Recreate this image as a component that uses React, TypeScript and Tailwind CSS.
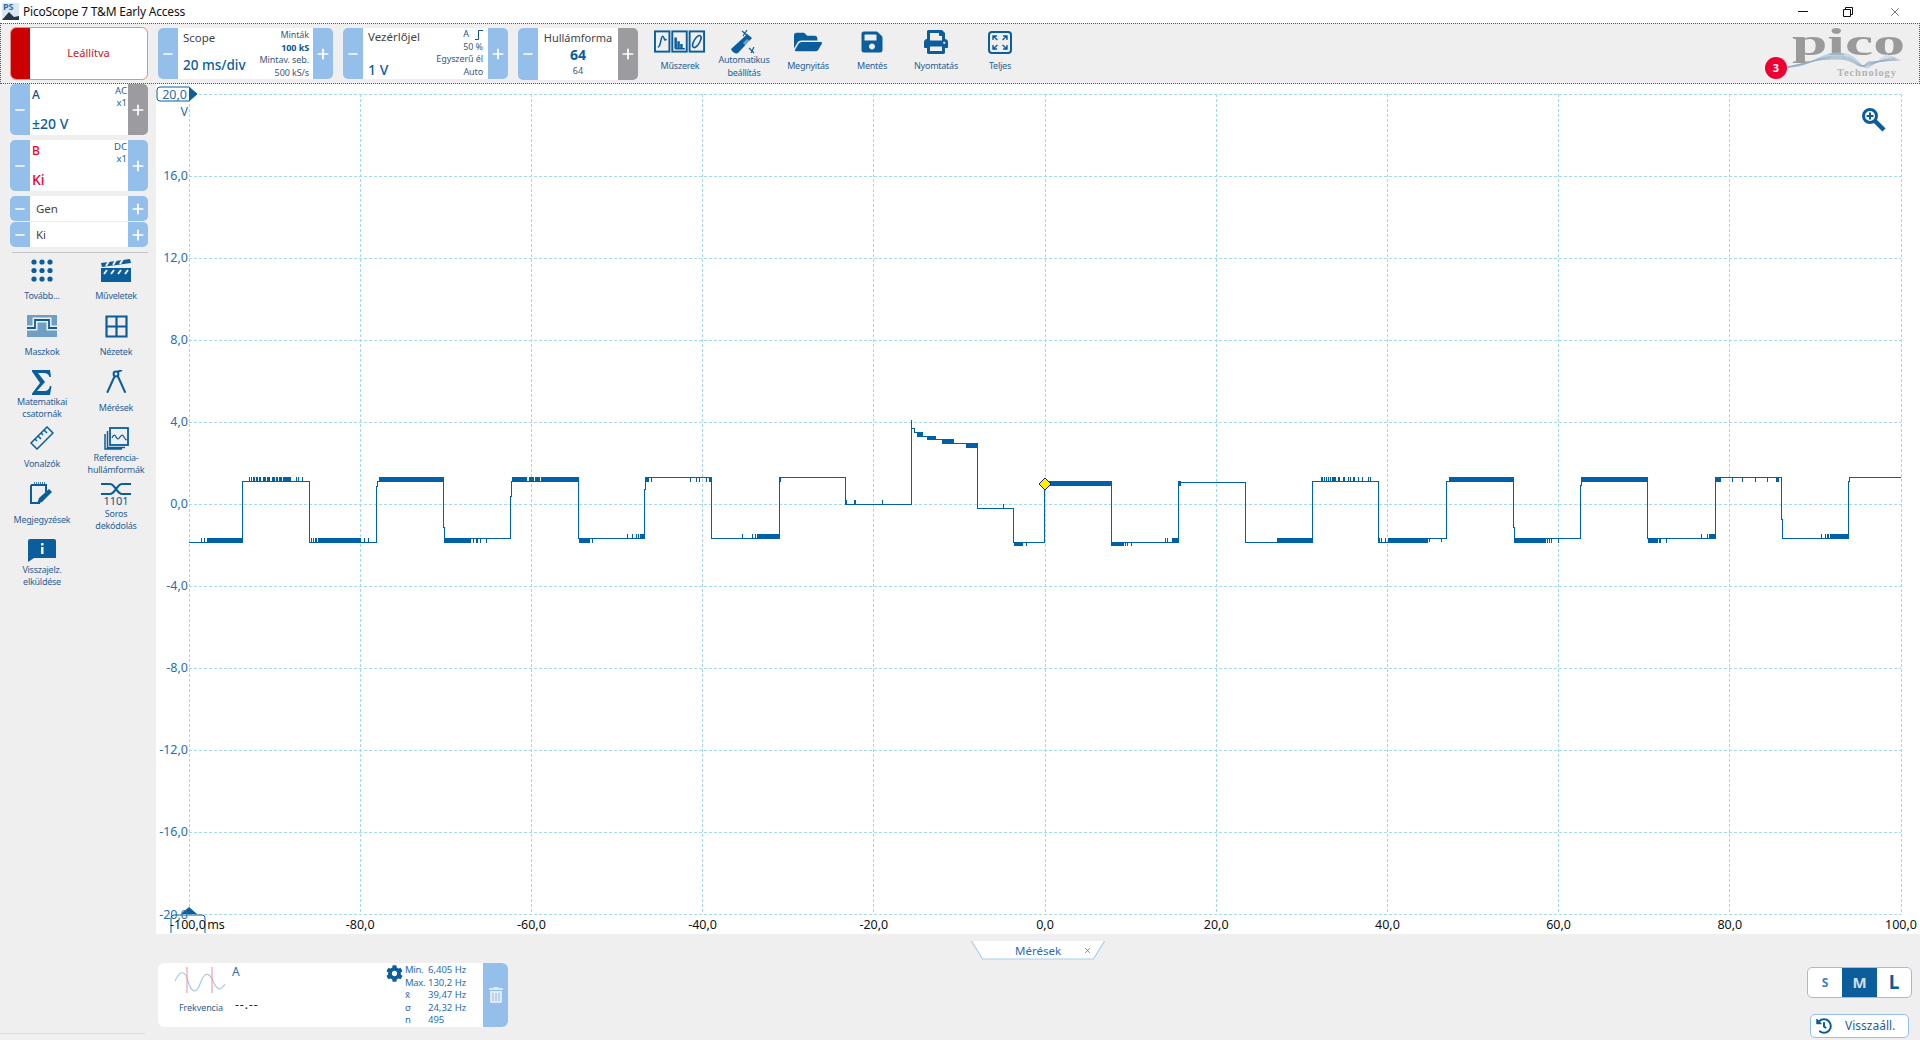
import { Minus, Plus, X } from 'lucide-react';
import { FaCog, FaFolderOpen, FaHistory, FaPrint, FaSave, FaTrashAlt } from 'react-icons/fa';
import type { ReactNode } from 'react';

const BLUE = '#0b5d9c';

type Rect = [number, number, number, number];

const band = (y1: number, y2: number, spans: [number, number][]): Rect[] => spans.map(([a, b]) => [a, b, y1, y2]);

const trace: [number, number][] = [
  [189, 542], [242.5, 542], [242.5, 481], [309.5, 481], [309.5, 542], [376.5, 542], [376.5, 486], [377.5, 486], [377.5, 481],
  [443, 481], [443, 527], [444, 527], [444, 538], [510.5, 538], [510.5, 496], [511.5, 496], [511.5, 481], [578.5, 481],
  [578.5, 538], [644.5, 538], [644.5, 489], [645.5, 489], [645.5, 477], [711, 477], [711, 538], [779.5, 538], [779.5, 477],
  [845.5, 477], [845.5, 504], [911, 504], [911, 420], [911, 428], [914.5, 428], [914.5, 432], [922, 432], [922, 436], [935, 436],
  [935, 439], [952, 439], [952, 443], [977.5, 443], [977.5, 508], [1013, 508], [1013, 542], [1044.5, 542], [1044.5, 484],
  [1111.5, 484], [1111.5, 542], [1178.5, 542], [1178.5, 482], [1245.5, 482], [1245.5, 542], [1312.5, 542], [1312.5, 481.5],
  [1378.5, 481.5], [1378.5, 542], [1427, 542], [1427, 538], [1446.5, 538], [1446.5, 481], [1513.5, 481], [1513.5, 527],
  [1514.5, 527], [1514.5, 538], [1580.5, 538], [1580.5, 485], [1581.5, 485], [1581.5, 481], [1647.5, 481], [1647.5, 538],
  [1715.5, 538], [1715.5, 477], [1781.5, 477], [1781.5, 519], [1782.5, 519], [1782.5, 538], [1848.5, 538], [1848.5, 481],
  [1849.5, 481], [1849.5, 477], [1901, 477],
];

const bands: Rect[] = [
  ...band(538, 542, [[201, 202], [204, 205], [207, 243], [311, 312], [313, 314], [315, 317], [318, 361], [364, 365], [368, 369], [376, 377]]),
  ...band(477, 481, [[249, 250], [251, 252], [253, 255], [256, 258], [259, 261], [263, 266], [267, 270], [272, 275], [276, 278], [279, 282], [283, 291], [296, 297], [298, 299], [302, 303]]),
  ...band(477, 482, [[379, 443.5], [512, 527], [529, 534], [535, 540], [541, 578.5], [1449, 1514], [1581, 1648], [1500, 1514]]),
  ...band(538, 543, [[444, 471], [473, 474], [476, 478], [480, 481], [486, 487], [579, 590], [592, 593], [1514, 1546], [1547, 1548], [1549, 1550], [1551, 1552], [1558, 1559], [1648, 1658], [1659, 1661], [1666, 1667]]),
  ...band(534, 538, [[627, 628], [632, 633], [636, 637], [638, 639], [640, 645], [742, 743], [752, 753], [755, 756], [757, 780], [1701, 1702], [1707, 1708], [1709, 1716], [1821, 1822], [1825, 1826], [1827, 1829], [1830, 1849]]),
  ...band(477, 482, [[645, 649], [651, 652], [690, 691], [696, 697], [699, 700], [706, 707], [709, 711], [779, 781], [1715, 1721], [1732, 1733], [1742, 1743], [1755, 1756], [1767, 1768], [1776, 1779]]),
  ...band(500, 504, [[846, 847], [854, 856], [882, 883]]),
  ...band(432, 437, [[917, 922]]),
  ...band(436, 440, [[927, 935]]),
  ...band(439, 444, [[942, 952], [952.5, 953.5]]),
  ...band(443, 448, [[966, 978]]),
  ...band(504, 508, [[1003, 1004]]),
  ...band(542, 546, [[1014, 1023], [1026, 1027], [1111, 1124], [1125, 1126], [1127, 1128], [1131, 1132]]),
  ...band(481, 486, [[1046, 1112], [1178, 1181]]),
  ...band(538, 542, [[1165, 1166], [1167, 1168], [1172, 1179], [1277, 1313], [1379, 1380], [1381, 1382], [1385, 1386], [1388, 1427], [1429, 1430], [1441, 1442]]),
  ...band(477, 481, [[1321, 1323], [1324, 1325], [1326, 1327], [1328, 1329], [1330, 1331], [1332, 1336], [1338, 1340], [1343, 1345], [1348, 1349], [1350, 1351], [1353, 1355], [1358, 1359], [1362, 1363], [1368, 1369], [1370, 1371]]),
];

const yLabels = ['16,0', '12,0', '8,0', '4,0', '0,0', '-4,0', '-8,0', '-12,0', '-16,0'];
const xLabels = ['-80,0', '-60,0', '-40,0', '-20,0', '0,0', '20,0', '40,0', '60,0', '80,0', '100,0'];
const gridX = Array.from({ length: 11 }, (_, i) => 189 + i * 171.2);
const gridY = Array.from({ length: 11 }, (_, i) => 94 + i * 82);

const StepButton = ({ kind, gray, className = '' }: { kind: 'minus' | 'plus'; gray?: boolean; className?: string }) => (
  <div className={`flex w-5 items-center justify-center text-white ${gray ? 'bg-[#9c9ca0]' : 'bg-[#93bfea]'} ${className}`}>
    {kind === 'minus' ? <Minus size={14} strokeWidth={2.6} /> : <Plus size={16} strokeWidth={2.6} />}
  </div>
);

const Stepper = ({ className, children, grayPlus }: { className: string; children: ReactNode; grayPlus?: boolean }) => (
  <div className={`flex overflow-hidden rounded-[5px] bg-white ${className}`}>
    <StepButton kind="minus" />
    <div className="relative min-w-0 flex-1">{children}</div>
    <StepButton kind="plus" gray={grayPlus} />
  </div>
);

const Small = ({ children, bold }: { children: ReactNode; bold?: boolean }) => (
  <div className={`text-right text-[9px] leading-[12.5px] tracking-[-0.1px] ${bold ? 'font-bold text-[#12548c]' : 'text-[#3d5a78]'}`}>{children}</div>
);

const Channel = ({ name, coupling, value, red, grayPlus }: { name: string; coupling: string; value: string; red?: boolean; grayPlus?: boolean }) => (
  <Stepper className="ml-[10px] h-[51px] w-[138px]" grayPlus={grayPlus}>
    <div className="flex h-full flex-col justify-between pb-[1px] pl-[2px] pr-[1px]">
      <div className="flex justify-between">
        <span className={`pt-[2px] text-[12px] font-medium ${red ? 'text-[#ec0033]' : 'text-[#12548c]'}`}>{name}</span>
        <div className="pt-[1px] text-right text-[9.5px] leading-[12px] text-[#2a5f95]">
          <div>{coupling}</div>
          <div>x1</div>
        </div>
      </div>
      <span className={`text-[14px] font-medium leading-[20px] ${red ? 'text-[#ec0033]' : 'text-[#0b5d9c]'}`}>{value}</span>
    </div>
  </Stepper>
);

const MusicIcon = () => (
  <svg width="52" height="24" viewBox="0 0 54 24" fill="none" stroke={BLUE} strokeWidth="1.6">
    <rect x="1" y="1" width="15" height="21" strokeWidth="2" />
    <rect x="19" y="1" width="15" height="21" strokeWidth="2" />
    <rect x="37" y="1" width="15" height="21" strokeWidth="2" />
    <path d="M4 17c3 1 3-11 5-11s1 6 4 3" />
    <path d="M22 19V8h1v11h2v-7h1v7h2v-4h1v4h3" />
    <ellipse cx="44.5" cy="11.5" rx="3" ry="7" transform="rotate(30 44.5 11.5)" />
  </svg>
);

const WandIcon = () => (
  <svg width="26" height="24" viewBox="0 0 26 24" fill={BLUE}>
    <path d="M13 9l5-5 5 4-14 15c-2 1-4 0-6-2l-1-2z" transform="translate(-2 0)" />
    <path d="M11 1l6 5M16 0l-4 6M18 18l5 5M23 17l-3 6" stroke={BLUE} strokeWidth="1.2" fill="none" />
    <path d="M12 13l3 3 4-5-3-2z" fill="#efefef" opacity="0.45" />
  </svg>
);

const FullIcon = () => (
  <svg width="24" height="23" viewBox="0 0 24 23" fill="none" stroke={BLUE} strokeWidth="1.4">
    <rect x="1" y="1" width="22" height="21" rx="3" strokeWidth="2" />
    <path d="M5 9V5h4M5 5l4.500 4M19 9V5h-4M19 5l-4.500 4M5 14v4h4M5 18l4.500-4M19 14v4h-4M19 18l-4.500-4" />
  </svg>
);

const DotsIcon = () => (
  <svg width="22" height="23" viewBox="0 0 22 23" fill={BLUE}>
    {[3, 11.5, 20].flatMap((cy) => [3, 11, 19].map((cx) => <circle key={`${cx}-${cy}`} cx={cx} cy={cy} r="2.6" />))}
  </svg>
);

const ClapIcon = () => (
  <svg width="30" height="23" viewBox="0 0 30 23" fill={BLUE}>
    <path d="M0 4L29 0l1 4L1 8z" />
    <path d="M0 9h30v14H0z" />
    <path d="M5 7l3-5M12 6l3-5M19 5l3-5" stroke="#efefef" strokeWidth="2" />
    <path d="M6 11l-3 4M13 11l-3 4M20 11l-3 4M27 11l-3 4" stroke="#efefef" strokeWidth="2" />
  </svg>
);

const MaskIcon = () => (
  <svg width="30" height="22" viewBox="0 0 30 22">
    <rect width="30" height="22" fill="#6f9fc4" />
    <path d="M0 13h8V5h14v8h8" fill="none" stroke="#efefef" strokeWidth="5" />
    <path d="M0 13h8V5h14v8h8" fill="none" stroke={BLUE} strokeWidth="1.8" />
  </svg>
);

const ViewsIcon = () => (
  <svg width="23" height="23" viewBox="0 0 23 23" fill="none" stroke={BLUE} strokeWidth="2.2">
    <path d="M1.5 1.5h20v20h-20zM11.5 1.5v20M1.5 11.5h20" />
  </svg>
);

const SigmaIcon = () => (
  <svg width="20" height="25" viewBox="0 0 20 25" fill={BLUE}>
    <path d="M0 0h18l1 7h-1.500c-1-3-2.500-4-6-4H6l7 9-8 9h7c3 0 5-1 6-5h1.500L18 25H0v-1.500L8 13 0 1.500z" />
  </svg>
);

const CompassIcon = () => (
  <svg width="20" height="24" viewBox="0 0 20 24" fill="none" stroke={BLUE} strokeWidth="2">
    <circle cx="10" cy="4" r="2.400" />
    <path d="M8.500 6.500L1.500 22M12 6.500L19 22" strokeLinecap="round" />
    <path d="M11 2l5-2" />
  </svg>
);

const RulerIcon = () => (
  <svg width="24" height="24" viewBox="0 0 24 24" fill="none" stroke={BLUE} strokeWidth="1.500">
    <path d="M1 17L17 1l6 6L7 23z" />
    <path d="M5 13l2 2M8 10l3 3M11 7l2 2M14 4l3 3" />
  </svg>
);

const RefIcon = () => (
  <svg width="25" height="23" viewBox="0 0 25 23" fill="none" stroke={BLUE} strokeWidth="1.500">
    <rect x="6" y="1" width="18" height="17" strokeWidth="1.800" />
    <path d="M3.500 4v16.500H21M1 7v15h17" />
    <path d="M8 11c3-7 4 1 6 1s3-7 6-2 2 2 2 2" strokeWidth="1.200" />
  </svg>
);

const NoteIcon = () => (
  <svg width="26" height="24" viewBox="0 0 26 24" fill="none">
    <path d="M2 3h15v7M2 3v18h9" stroke={BLUE} strokeWidth="2" />
    <path d="M5 1h12" stroke={BLUE} strokeWidth="1.500" strokeDasharray="1 1" />
    <path d="M8 22l2-6 10-9 3 3-10 10z" fill={BLUE} />
  </svg>
);

const SerialIcon = () => (
  <div className="flex flex-col items-center">
    <svg width="30" height="14" viewBox="0 0 30 14" fill="none" stroke={BLUE} strokeWidth="2.200">
      <path d="M0 2h9c3 0 5 4 6 5s3 5 6 5h9M0 12h9c3 0 5-4 6-5s3-5 6-5h9" />
    </svg>
    <span className="text-[11px] leading-[10px] text-[#12548c]">1101</span>
  </div>
);

const FeedbackIcon = () => (
  <svg width="28" height="23" viewBox="0 0 28 23" fill={BLUE}>
    <path d="M2 0h24a2 2 0 0 1 2 2v17H6l-6 4V2a2 2 0 0 1 2-2z" />
    <rect x="13" y="4" width="2.500" height="2.500" fill="#fff" />
    <rect x="13" y="8" width="2.500" height="7" fill="#fff" />
  </svg>
);

const EdgeIcon = () => (
  <svg className="inline-block" width="8" height="10" viewBox="0 0 8 10" fill="none" stroke="#12548c" strokeWidth="1">
    <path d="M0 9.500h3.500V.5H8" />
  </svg>
);

const tools: { label: ReactNode; icon: ReactNode }[] = [
  { label: 'Tovább...', icon: <DotsIcon /> },
  { label: 'Műveletek', icon: <ClapIcon /> },
  { label: 'Maszkok', icon: <MaskIcon /> },
  { label: 'Nézetek', icon: <ViewsIcon /> },
  { label: <>Matematikai<br />csatornák</>, icon: <SigmaIcon /> },
  { label: 'Mérések', icon: <CompassIcon /> },
  { label: 'Vonalzók', icon: <RulerIcon /> },
  { label: <>Referencia-<br />hullámformák</>, icon: <RefIcon /> },
  { label: 'Megjegyzések', icon: <NoteIcon /> },
  { label: <>Soros<br />dekódolás</>, icon: <SerialIcon /> },
  { label: <>Visszajelz.<br />elküldése</>, icon: <FeedbackIcon /> },
];

const topTools: { label: ReactNode; icon: ReactNode }[] = [
  { label: 'Műszerek', icon: <MusicIcon /> },
  { label: <>Automatikus<br />beállítás</>, icon: <WandIcon /> },
  { label: 'Megnyitás', icon: <FaFolderOpen size={28} color={BLUE} /> },
  { label: 'Mentés', icon: <FaSave size={24} color={BLUE} /> },
  { label: 'Nyomtatás', icon: <FaPrint size={24} color={BLUE} /> },
  { label: 'Teljes', icon: <FullIcon /> },
];

const Logo = () => (
  <svg className="overflow-visible" width="120" height="54" viewBox="0 0 120 54">
    <text x="4" y="29" fontFamily="'Liberation Serif', serif" fontWeight="700" fontSize="37" fill="#9a9a9a" textLength="113" lengthAdjust="spacingAndGlyphs">pico</text>
    {[0, 1, 2, 3, 4, 5, 6].map((i) => (
      <path key={i} d={`M0 41 C25 ${41 - i} 30 ${27 + i} 50 ${27 + i} S70 ${41 + i} 80 ${42 - i} L${100 + i * 2} ${28 + i}`} fill="none" stroke={i < 3 ? '#a9c8e4' : '#8fa9c0'} strokeWidth="0.7" />
    ))}
    <text x="49" y="50" fontFamily="'Liberation Serif', serif" fontWeight="700" fontSize="10.500" fill="#b4b4b4" textLength="59">Technology</text>
  </svg>
);

const Chart = () => (
  <svg className="block h-full w-full" viewBox="156 84 1764 850">
    <g stroke="#a5dbe8" strokeDasharray="3 2" shapeRendering="crispEdges">
      {gridX.map((x) => <line key={x} x1={x} x2={x} y1={94} y2={914} />)}
      {gridY.map((y) => <line key={y} x1={189} x2={1901} y1={y} y2={y} />)}
    </g>
    <g fill="#0060a8" shapeRendering="crispEdges">
      {bands.map((r, i) => <rect key={i} x={r[0]} y={r[2]} width={r[1] - r[0]} height={r[3] - r[2]} />)}
      <polyline points={trace.map((p) => p.join(',')).join(' ')} fill="none" stroke="#0060a8" strokeWidth="1" />
    </g>
    <path d="M1045 478l6 6-6 6-6-6z" fill="#ffef00" stroke="#1414c8" strokeWidth="1" />

    <g fontSize="12.500" fill="#2a6db0" textAnchor="end">
      {yLabels.map((l, i) => <text key={l} x="188" y={180 + i * 82}>{l}</text>)}
      <text x="188" y="116">V</text>
    </g>
    <path d="M160 87h29l8 7-8 7h-29a3 3 0 0 1-3-3v-8a3 3 0 0 1 3-3z" fill="#fff" stroke={BLUE} />
    <path d="M189 87l8 7-8 7z" fill={BLUE} />
    <text x="187" y="98.500" fontSize="12.500" fill="#2a6db0" textAnchor="end">20,0</text>

    <path d="M171 933v-15a3 3 0 0 1 3-3h28a3 3 0 0 1 3 3v15" fill="#fff" stroke={BLUE} />
    <path d="M181 914l8-7 8 7z" fill={BLUE} />
    <text x="188" y="919" fontSize="12.500" fill="#2a6db0" textAnchor="end">-20,0</text>
    <g fontSize="12.500" fill="#111" textAnchor="middle">
      {xLabels.map((l, i) => <text key={l} x={360.200 + i * 171.2} y="929">{l}</text>)}
      <text x="188" y="929">-100,0</text>
      <text x="216" y="929">ms</text>
    </g>
    <g fill="none" stroke={BLUE}>
      <circle cx="1870" cy="116" r="6.500" strokeWidth="3" />
      <path d="M1866.500 116h7M1870 112.500v7" strokeWidth="2" />
      <path d="M1875 121l9 9" strokeWidth="4.500" />
    </g>
  </svg>
);

const stats = [
  ['Min.', '6,405 Hz'],
  ['Max.', '130,2 Hz'],
  ['x̄', '39,47 Hz'],
  ['σ', '24,32 Hz'],
  ['n', '495'],
];

const MeasureCard = () => (
  <div className="ml-[2px] flex h-[64px] w-[350px] overflow-hidden rounded-[6px] bg-white">
    <div className="relative flex-1">
      <div className="flex h-full">
        <div className="w-[74px] pt-[4px]">
          <svg className="ml-[17px]" width="50" height="28" viewBox="0 0 50 28" fill="none">
            <path d="M0 14c5-11 10-11 13 0s8 14 12 3 8-14 13-3 8 9 12 3" stroke="#a6c8ec" strokeWidth="1.200" />
            <path d="M12 0v26M37 0v26" stroke="#f4a0a0" strokeWidth="1.200" />
          </svg>
          <div className="mt-[6px] pl-[21px] text-[9px] leading-[13px] tracking-[-0.1px] text-[#2a5f95]">Frekvencia</div>
        </div>
        <div className="w-[160px]">
          <div className="pt-[1px] text-[12px] leading-[16px] text-[#2a6db0]">A</div>
          <div className="ml-[3px] mt-[18px] text-[12px] leading-[14px] tracking-[1px] text-[#222]">--.--</div>
        </div>
        <FaCog className="ml-[-6px] mt-[2px]" size={17} color={BLUE} />
        <div className="ml-[2px] flex-1 pt-[1px] text-[9.500px] leading-[12.500px] text-[#2a6db0]">
          {stats.map(([k, v]) => (
            <div key={k} className="flex">
              <span className="w-[23px] tracking-[-0.3px]">{k}</span>
              <span>{v}</span>
            </div>
          ))}
        </div>
      </div>
    </div>
    <div className="flex w-[25px] items-center justify-center bg-[#93bfea]">
      <FaTrashAlt size={16} color="#dfeaf6" />
    </div>
  </div>
);

export default function App() {
  return (
    <div className="flex h-[1040px] w-[1920px] flex-col overflow-hidden bg-[#efefef] font-['Noto_Sans',sans-serif] text-[#333]">
      <div className="flex h-[23px] items-center bg-white pl-[2px]">
        <div className="relative h-[17px] w-[17px] bg-[#dbe7f3]">
          <span className="absolute left-[1px] top-[-2px] text-[9px] font-bold leading-[12px] text-[#2a6db0]">PS</span>
          <svg className="absolute bottom-0 left-0" width="17" height="9" viewBox="0 0 17 9"><path d="M0 9L7 1l5 5 5-1v4z" fill="#26374a" /></svg>
        </div>
        <span className="ml-[4px] text-[12px] leading-[16px] tracking-[-0.2px] text-[#111]">PicoScope 7 T&amp;M Early Access</span>
        <div className="ml-auto flex items-center text-[#111]">
          <div className="mr-[35px] h-[1px] w-[10px] bg-[#111]" />
          <svg className="mr-[35px]" width="10" height="10" viewBox="0 0 10 10" fill="none" stroke="#111"><path d="M.5 2.500h7v7h-7zM2.500 2.500v-2h7v7h-2" /></svg>
          <X className="mr-[18px]" size={14} strokeWidth={1} />
        </div>
      </div>

      <div className="relative flex h-[61px] items-center gap-[10px] border border-dotted border-[#555] pl-[9px]">
        <div className="flex h-[53px] w-[138px] overflow-hidden rounded-[6px] border border-[#e98c8c] bg-white">
          <div className="w-[19px] bg-[#cc0000]" />
          <div className="flex flex-1 items-center justify-center text-[11px] text-[#d01818]">Leállítva</div>
        </div>
        <Stepper className="h-[51px] w-[175px]">
          <div className="flex h-full items-stretch justify-between pl-[5px] pr-[4px]">
            <div className="flex flex-col justify-between pb-[4px] pt-[1px]">
              <span className="text-[11.500px] leading-[18px] text-[#444]">Scope</span>
              <span className="text-[13.500px] font-medium leading-[20px] text-[#0b5d9c]">20 ms/div</span>
            </div>
            <div className="pt-[1px]">
              <Small>Minták</Small>
              <Small bold>100 kS</Small>
              <Small>Mintav. seb.</Small>
              <Small>500 kS/s</Small>
            </div>
          </div>
        </Stepper>
        <Stepper className="h-[51px] w-[165px]">
          <div className="flex h-full items-stretch justify-between pl-[5px] pr-[5px]">
            <div className="flex flex-col justify-between">
              <span className="text-[11.500px] leading-[18px] text-[#444]">Vezérlőjel</span>
              <span className="text-[14px] font-medium leading-[18px] text-[#0b5d9c]">1 V</span>
            </div>
            <div>
              <Small><span className="text-[#12548c]">A</span><span className="ml-[6px]"><EdgeIcon /></span></Small>
              <Small>50 %</Small>
              <Small>Egyszerű él</Small>
              <Small>Auto</Small>
            </div>
          </div>
        </Stepper>
        <Stepper className="h-[52px] w-[120px]" grayPlus>
          <div className="flex h-full flex-col items-center text-center">
            <span className="pt-[1px] text-[11px] leading-[17px] text-[#444]">Hullámforma</span>
            <span className="text-[14px] font-bold leading-[18px] text-[#0b5d9c]">64</span>
            <span className="text-[9px] leading-[14px] text-[#3d5a78]">64</span>
          </div>
        </Stepper>
        <div className="flex">
          {topTools.map((t, i) => (
            <div key={i} className="flex w-[64px] flex-col items-center">
              <div className="flex h-[29px] items-center justify-center">{t.icon}</div>
              <div className="mt-[-3px] flex h-[26px] items-center whitespace-nowrap text-center text-[9px] leading-[12.500px] tracking-[-0.25px] text-[#2a5f95]">
                <span>{t.label}</span>
              </div>
            </div>
          ))}
        </div>
        <div className="absolute right-[11px] top-[2px]"><Logo /></div>
        <div className="absolute left-[1764px] top-[33px] flex h-[22px] w-[22px] items-center justify-center rounded-full bg-[#ee0033] text-[11px] font-bold text-white">3</div>
      </div>

      <div className="flex min-h-0 flex-1">
        <div className="flex w-[156px] flex-col">
          <div className="flex flex-col gap-[5px]">
            <Channel name="A" coupling="AC" value="±20 V" grayPlus />
            <Channel name="B" coupling="DC" value="Ki" red />
            <div className="ml-[10px] flex w-[138px] flex-col gap-[1px]">
              {['Gen', 'Ki'].map((t) => (
                <Stepper key={t} className="h-[25px] rounded-[4px]">
                  <div className="flex h-full items-center pl-[6px] text-[11.5px] text-[#444]">{t}</div>
                </Stepper>
              ))}
            </div>
          </div>
          <div className="ml-[12px] mt-[5px] h-[1px] w-[136px] bg-[#c4c4c4]" />
          <div className="ml-[5px] mt-[2px] grid grid-cols-[74px_74px] auto-rows-[56px]">
            {tools.map((t, i) => (
              <div key={i} className="flex flex-col items-center">
                <div className="flex h-[30px] items-center justify-center">{t.icon}</div>
                <div className="flex h-[22px] items-center whitespace-nowrap text-center text-[9px] leading-[12.500px] tracking-[-0.25px] text-[#2a5f95]">
                  <span>{t.label}</span>
                </div>
              </div>
            ))}
          </div>
          <div className="mb-[6px] mt-auto h-[1px] w-[145px] bg-[#dcdcdc]" />
        </div>

        <div className="flex min-w-0 flex-1 flex-col">
          <div className="h-[850px] bg-white"><Chart /></div>
          <div className="flex flex-1 flex-col pt-[7px]">
            <div className="relative mx-auto h-[19px] w-[134px]">
              <svg className="absolute inset-0" width="134" height="19" viewBox="0 0 134 19">
                <path d="M.5 0l11 18h111l11-18z" fill="#fff" />
                <path d="M.5 0l11 18h111l11-18" fill="none" stroke="#a9cdee" strokeWidth="1.200" />
              </svg>
              <div className="relative flex h-full items-center justify-center text-[11.500px] text-[#2a6db0]">Mérések</div>
              <X className="absolute right-[13px] top-[5px] text-[#0b5d9c]" size={9} strokeWidth={1.500} />
            </div>
            <div className="mt-[3px] flex items-start justify-between pr-[8px]">
              <MeasureCard />
              <div className="flex flex-col items-center pt-[4px]">
                <div className="flex h-[31px] w-[105px] overflow-hidden rounded-[5px] border border-[#93bfea] bg-white">
                  <div className="flex flex-1 items-center justify-center text-[12px] font-bold text-[#3f7fb5]">S</div>
                  <div className="flex w-[35px] items-center justify-center bg-[#0b5d9c] text-[15px] font-bold text-[#cfe0f0]">M</div>
                  <div className="flex flex-1 items-center justify-center text-[19px] font-bold text-[#0b5d9c]">L</div>
                </div>
                <div className="mt-[16px] flex h-[24px] w-[99px] items-center rounded-[5px] border border-[#93bfea] bg-white pl-[5px] text-[12px] text-[#2a5f95]">
                  <FaHistory size={16} color={BLUE} />
                  <span className="ml-[13px]">Visszaáll.</span>
                </div>
              </div>
            </div>
          </div>
        </div>
      </div>
    </div>
  );
}
